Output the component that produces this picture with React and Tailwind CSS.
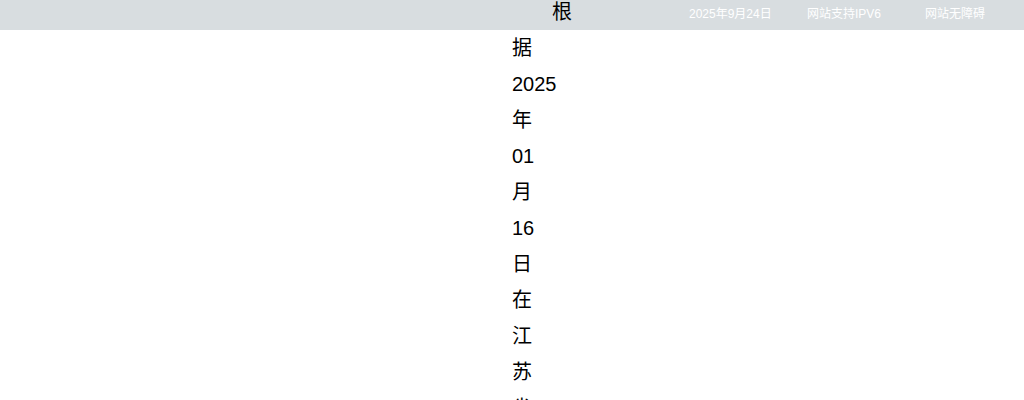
export default function App() {
  const text = "根据2025年01月16日在江苏省";
  return (
    <div className="relative w-[1024px] h-[400px] overflow-hidden bg-white" style={{ fontFamily: '"Liberation Sans","Noto Sans CJK SC",sans-serif' }}>
      <div className="absolute left-0 top-0 w-full h-[30px] bg-[#d8dde0] flex items-center pl-[689px] text-[12px] text-white">
        <div className="w-[118px] shrink-0 whitespace-nowrap -mt-[2px]">2025年9月24日</div>
        <div className="w-[118px] shrink-0 whitespace-nowrap -mt-[2px]">网站支持IPV6</div>
        <div className="w-[118px] shrink-0 whitespace-nowrap -mt-[2px]">网站无障碍</div>
      </div>
      <div className="relative ml-[512px] w-[1px] -mt-[6px] text-[20px] leading-[36px] text-black indent-[40px]">
        {text}
      </div>
    </div>
  );
}
